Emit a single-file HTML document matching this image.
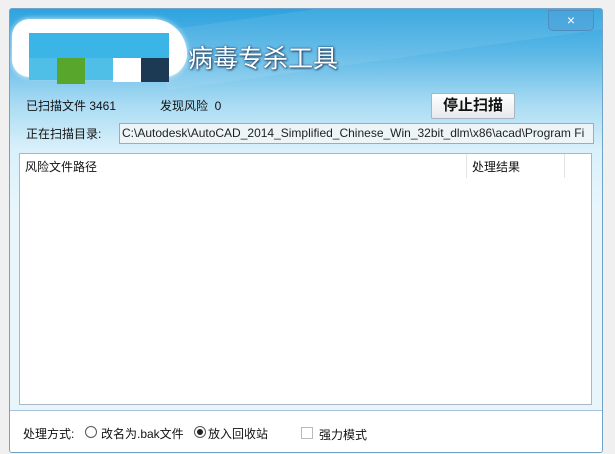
<!DOCTYPE html>
<html><head><meta charset="utf-8"><style>
body{margin:0;width:615px;height:454px;background:#f0f0f0;position:relative;overflow:hidden;font-family:"Liberation Sans","Noto Sans CJK SC",sans-serif;font-size:12px;color:#111}
.win{position:absolute;left:9px;top:8px;width:592px;height:443px;border:1px solid #6fa3c9;border-radius:3px;overflow:hidden;
background:linear-gradient(180deg,#2ea3de 0px,#5cb8e6 45px,#a9dbf3 95px,#d9f0fa 140px,#e8f6fc 200px,#e8f6fc 100%)}
.hl{position:absolute;left:150px;top:-20px;width:600px;height:60px;background:rgba(255,255,255,0.08);transform:rotate(-8deg)}
.blob{position:absolute;left:2px;top:10px;width:175px;height:58px;background:#fff;border-radius:30px 60px 40px 30px;box-shadow:0 0 6px rgba(255,255,255,.8)}
.abs{position:absolute;white-space:nowrap}
.list{position:absolute;left:9px;top:144px;width:571px;height:250px;background:#fff;border:1px solid #a9b8c4}
.bot{position:absolute;left:0;top:401px;width:592px;height:42px;background:#fff;border-top:1px solid #a9c4d8}
</style></head><body>
<div class="win">
 <div class="hl"></div>
 <div class="blob"></div>
 <div class="abs" style="left:19px;top:24px;width:140px;height:25px;background:#3bb4e6"></div>
 <div class="abs" style="left:19px;top:49px;width:140px;height:22px;background:#4fbfe8"></div>
 <div class="abs" style="left:47px;top:49px;width:28px;height:26px;background:#58a62c"></div>
 <div class="abs" style="left:103px;top:49px;width:28px;height:24px;background:#fff"></div>
 <div class="abs" style="left:131px;top:49px;width:28px;height:24px;background:#1d3a55"></div>
 <div class="abs" style="left:178px;top:30px;font-size:25px;color:#fff;text-shadow:0 0 2px #246,1px 1px 2px #246">病毒专杀工具</div>
 <div class="abs" style="left:538px;top:1px;width:44px;height:19px;border:1px solid #4e8fbf;border-radius:0 0 5px 5px;background:rgba(80,160,215,.5);color:#fff;text-align:center;font-size:14px;line-height:18px">×</div>
 <div class="abs" style="left:16px;top:88px">已扫描文件 3461</div>
 <div class="abs" style="left:150px;top:88px">发现风险&nbsp; 0</div>
 <div class="abs" style="left:421px;top:84px;width:82px;height:24px;border:1px solid #a8b4bf;border-radius:2px;background:linear-gradient(#fff,#e6e9ec);font-weight:bold;font-size:15px;text-align:center;line-height:24px">停止扫描</div>
 <div class="abs" style="left:16px;top:116px">正在扫描目录:</div>
 <div class="abs" style="left:109px;top:114px;width:471px;height:19px;border:1px solid #a3aab1;background:#eef5f8;line-height:19px;padding-left:2px;overflow:hidden;color:#222">C:\Autodesk\AutoCAD_2014_Simplified_Chinese_Win_32bit_dlm\x86\acad\Program Fi</div>
 <div class="list">
  <div class="abs" style="left:5px;top:4px">风险文件路径</div>
  <div class="abs" style="left:446px;top:0;width:1px;height:24px;background:#e3e3e3"></div>
  <div class="abs" style="left:452px;top:4px">处理结果</div>
  <div class="abs" style="left:544px;top:0;width:1px;height:24px;background:#e3e3e3"></div>
 </div>
 <div class="bot">
  <div class="abs" style="left:13px;top:14px">处理方式:</div>
  <div class="abs" style="left:75px;top:15px;width:10px;height:10px;border:1px solid #555;border-radius:50%"></div>
  <div class="abs" style="left:91px;top:14px">改名为.bak文件</div>
  <div class="abs" style="left:184px;top:15px;width:10px;height:10px;border:1px solid #555;border-radius:50%"></div>
  <div class="abs" style="left:187px;top:18px;width:6px;height:6px;background:#222;border-radius:50%"></div>
  <div class="abs" style="left:198px;top:14px">放入回收站</div>
  <div class="abs" style="left:291px;top:16px;width:10px;height:10px;border:1px solid #bbb"></div>
  <div class="abs" style="left:309px;top:15px">强力模式</div>
 </div>
</div>
</body></html>
